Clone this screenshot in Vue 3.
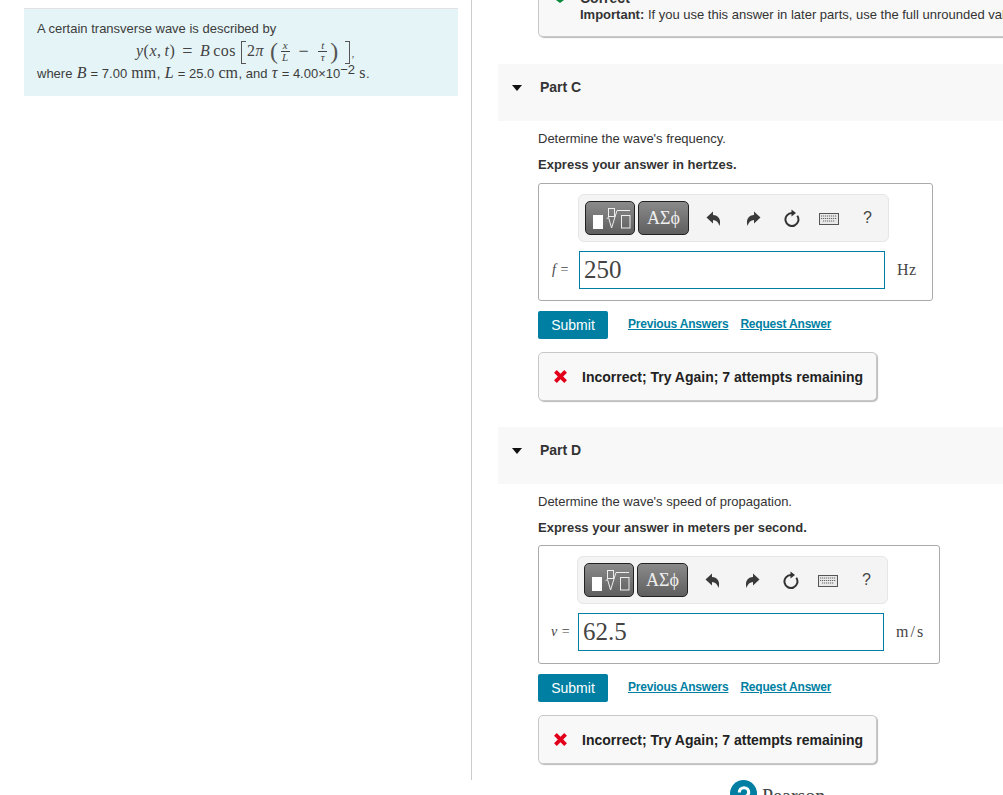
<script setup>
const parts = [
  { name: 'Part C', question: "Determine the wave's frequency.", express: 'Express your answer in hertzes.', symbol: 'f', value: '250', unit: 'Hz', wide: false },
  { name: 'Part D', question: "Determine the wave's speed of propagation.", express: 'Express your answer in meters per second.', symbol: 'v', value: '62.5', unit: 'm/s', wide: true }
]
</script>

<template>
  <div class="page">
    <aside class="left">
      <div class="intro">
        <div class="line1">A certain transverse wave is described by</div>
        <div class="eq">
          <i>y</i><span>(</span><i>x</i><span class="cm">,</span><i>t</i><span>)</span>
          <span class="equals">=</span>
          <i>B</i><span class="cos">cos</span>
          <span class="br open" aria-label="["></span><span class="two">2</span><i>π</i>
          <span class="big par first">(</span>
          <span class="frac"><i>x</i><i class="den">L</i></span>
          <span class="minus">−</span>
          <span class="frac"><i>t</i><i class="den">τ</i></span>
          <span class="big par">)</span><span class="br close" aria-label="]"></span><span class="comma">,</span>
        </div>
        <div class="line3">where <i class="m">B</i> = 7.00 <span class="m">mm</span>, <i class="m">L</i> = 25.0 <span class="m">cm</span>, and <i class="m">τ</i> = 4.00×10<sup>−2</sup> <span class="m">s</span>.</div>
      </div>
    </aside>

    <main class="right">
      <div class="correct">
        <div class="correct-title">
          <svg class="check" width="12" height="8" viewBox="0 0 12 8"><path d="M1 0 H9 L5 3 Z" fill="#0a8a3a" /></svg>
          <b>Correct</b>
        </div>
        <div class="important"><b>Important:</b> If you use this answer in later parts, use the full unrounded value in your calculations.</div>
      </div>

      <section v-for="p in parts" :key="p.name" class="part">
        <header class="part-head">
          <span class="tri"></span>
          <b>{{ p.name }}</b>
        </header>
        <div class="body">
          <p class="question">{{ p.question }}</p>
          <p class="express">{{ p.express }}</p>

          <div class="answer" :class="{ wide: p.wide }">
            <div class="toolbar">
              <div class="tbtn tmpl">
                <span class="block"></span>
                <svg width="27" height="28" viewBox="0 0 27 28" fill="none" stroke="#eee" stroke-width="1">
                  <rect x="3.5" y="4.5" width="6" height="8" />
                  <path d="M1.6 14.6 L3.5 13.5 L6.6 24 L12 6.5 H25" />
                  <rect x="16.5" y="11.5" width="8.5" height="12.5" />
                </svg>
              </div>
              <div class="tbtn greek">ΑΣϕ</div>
              <svg class="ic i-undo" width="16" height="16" viewBox="0 0 16 16"><path d="M0.5 6.5 L7 0.5 V4 C12 4 15.5 8 13.5 15 C12.5 11 10 9 7 9 V12.5 Z" fill="#3a3a3a" /></svg>
              <svg class="ic i-redo" width="16" height="16" viewBox="0 0 16 16"><path d="M15.5 6.5 L9 0.5 V4 C4 4 0.5 8 2.5 15 C3.5 11 6 9 9 9 V12.5 Z" fill="#3a3a3a" /></svg>
              <svg class="ic i-reset" width="18" height="18" viewBox="0 0 18 18" fill="none"><path d="M14.3 6.8 A6.5 6.5 0 1 1 9 4" stroke="#333" stroke-width="2" /><path d="M8.5 0.5 L13 4 L8.5 7.5 Z" fill="#333" /></svg>
              <svg class="ic i-kbd" width="20" height="12" viewBox="0 0 20 12"><rect x="0.5" y="0.5" width="19" height="11" fill="#e8e8e8" stroke="#555" /><path d="M2 3 H18 M2 5.5 H18 M4 8 H16" stroke="#666" stroke-width="1.2" stroke-dasharray="1.2 .8" /></svg>
              <span class="help">?</span>
            </div>
            <div class="input-row">
              <span class="sym"><i>{{ p.symbol }}</i> =</span>
              <div class="input">{{ p.value }}</div>
              <span class="unit">{{ p.unit }}</span>
            </div>
          </div>

          <div class="actions">
            <button class="submit">Submit</button>
            <a class="link">Previous Answers</a>
            <a class="link">Request Answer</a>
          </div>

          <div class="feedback">
            <svg width="15" height="15" viewBox="0 0 14 14"><path d="M1 3.5 L3.5 1 L7 4.5 L10.5 1 L13 3.5 L9.5 7 L13 10.5 L10.5 13 L7 9.5 L3.5 13 L1 10.5 L4.5 7 Z" fill="#e2001a" /></svg>
            <b>Incorrect; Try Again; 7 attempts remaining</b>
          </div>
        </div>
      </section>

      <div class="pearson">
        <svg width="27" height="27" viewBox="0 0 26 26"><circle cx="13" cy="13" r="13" fill="#007fa3" /><path d="M9 12 C9 6 18 6 18 12 C18 16 13 16 13 19 V24" fill="none" stroke="#fff" stroke-width="3" /></svg>
        <span>Pearson</span>
      </div>
    </main>
  </div>
</template>

<style>
html, body { margin: 0; padding: 0; background: #fff; }
</style>

<style scoped>
.page {
  width: 1003px;
  height: 795px;
  overflow: hidden;
  display: flex;
  align-items: flex-start;
  font-family: "Liberation Sans", Arial, sans-serif;
  color: #333;
  font-size: 13px;
  background: #fff;
}
.left {
  flex: none;
  box-sizing: border-box;
  width: 472px;
  height: 780px;
  padding: 8px 13px 0 24px;
  border-right: 1px solid #ccc;
}
.intro {
  background: #e5f5f7;
  border-top: 1px solid #e2e2e2;
  height: 88px;
  box-sizing: border-box;
  padding: 12px 13px 0;
  color: #3c3c3c;
}
.line1 { height: 16px; line-height: 16px; }
.eq {
  height: 26px;
  margin-top: 1px;
  padding-left: 99px;
  display: flex;
  align-items: center;
  font-family: "Liberation Serif", serif;
  font-size: 16px;
  letter-spacing: 0.5px;
  color: #444;
  white-space: nowrap;
}
.cm { margin-right: 3px; }
.equals { margin: 0 7px 0 7px; font-size: 18px; }
.cos { margin-left: 3px; }
.big { font-weight: 100; line-height: 26px; }
.br {
  box-sizing: border-box;
  flex: none;
  width: 5px;
  height: 23px;
  border: 1px solid #555;
  margin-top: 2px;
}
.open { border-right: none; margin-left: 5px; margin-right: 1px; }
.close { border-left: none; margin-left: 4px; }
.par { font-size: 24px; margin: 0 2px 0 3px; color: #555; }
.first { margin-left: 6px; }
.frac {
  display: inline-flex;
  flex-direction: column;
  align-items: center;
  font-size: 11px;
  line-height: 11px;
  width: 9px;
  letter-spacing: 0;
}
.den { border-top: 1px solid #444; width: 100%; text-align: center; }
.minus { margin: 0 9px; font-size: 18px; }
.comma { font-size: 10px; align-self: flex-end; margin-bottom: 5px; margin-left: 2px; }
.line3 { height: 18px; line-height: 18px; white-space: nowrap; }
.m { font-family: "Liberation Serif", serif; font-size: 16px; margin: 0 0.6px; }
.line3 sup { line-height: 0; vertical-align: 4px; font-size: 13px; }

.right { flex: 1; min-width: 0; padding-left: 26px; }
.correct {
  box-sizing: border-box;
  width: 540px;
  height: 37px;
  margin-left: 40px;
  margin-bottom: 27px;
  background: #f8f8f8;
  border: 1px solid #c8c8c8;
  border-top: none;
  border-radius: 0 0 5px 5px;
  box-shadow: 1px 1px 1px #bbb;
  padding-left: 41px;
  display: flex;
  flex-direction: column;
  justify-content: flex-end;
  padding-bottom: 13px;
  white-space: nowrap;
  overflow: hidden;
}
.correct-title { height: 14px; flex: none; font-size: 14px; position: relative; line-height: 14px; margin-bottom: 2px; }
.check { position: absolute; left: -25px; bottom: -3px; }
.important { font-size: 13px; line-height: 16px; height: 16px; flex: none; }
.part-head {
  height: 57px;
  background: #f8f8f8;
  display: flex;
  align-items: center;
  font-size: 14px;
  padding-left: 14px;
  padding-bottom: 12px;
  box-sizing: border-box;
}
.part-head b { margin-left: 18px; color: #333; }
.tri {
  width: 0; height: 0;
  border-left: 5.5px solid transparent;
  border-right: 5.5px solid transparent;
  border-top: 6px solid #111;
  margin-top: 2px;
}
.body { padding-left: 40px; }
.question { margin: 0; padding-top: 9px; line-height: 17px; height: 17px; }
.express { margin: 0 0 10px; padding-top: 9px; line-height: 17px; font-weight: bold; height: 17px; }
.answer {
  box-sizing: border-box;
  width: 395px;
  height: 118px;
  border: 1px solid #aaa;
  border-radius: 3px;
  padding: 10px 0 0 39px;
}
.answer.wide { width: 402px; height: 119px; padding-left: 38px; margin-top: -1px; }
.toolbar {
  box-sizing: border-box;
  width: 311px;
  height: 48px;
  background: #f4f4f4;
  border: 1px solid #e6e6e6;
  border-radius: 6px;
  display: flex;
  align-items: center;
  padding-left: 6px;
}
.tbtn {
  box-sizing: border-box;
  height: 34px;
  width: 50px;
  border: 1px solid #222;
  border-radius: 5px;
  background: linear-gradient(#8a8a8a, #5f5f5f);
  color: #eee;
  display: flex;
  align-items: center;
  justify-content: center;
}
.tmpl { margin-right: 3px; gap: 2px; justify-content: flex-start; padding-left: 7px; }
.block { width: 10px; height: 14px; background: #fff; margin-top: 7px; flex: none; }
.tmpl svg { flex: none; }
.greek { font-family: "Liberation Serif", serif; font-size: 18px; width: 51px; }
.ic { flex: none; margin-top: 2px; }
.i-undo { margin-left: 17px; }
.i-redo { margin-left: 23px; }
.i-reset { margin-left: 22px; margin-top: 0; }
.i-kbd { margin-left: 18px; }
.help { margin-left: 24px; font-size: 16px; color: #444; }
.input-row { display: flex; align-items: center; margin-top: 9px; margin-left: -27px; }
.sym {
  width: 27px;
  margin-left: 1px;
  flex: none;
  font-family: "Liberation Serif", serif;
  font-size: 14px;
  color: #444;
  white-space: nowrap;
  word-spacing: 1px;
}
.input {
  box-sizing: border-box;
  width: 306px;
  height: 38px;
  border: 1px solid #007fa3;
  padding-left: 4px;
  font-family: "Liberation Serif", serif;
  font-size: 25px;
  line-height: 36px;
  color: #444;
}
.unit { margin-left: 12px; font-family: "Liberation Serif", serif; font-size: 16px; letter-spacing: 0.5px; color: #444; }
.wide .unit { letter-spacing: 2px; }
.actions { display: flex; align-items: flex-start; margin-top: 10px; }
.submit {
  width: 70px;
  height: 28px;
  border: none;
  border-radius: 2px;
  background: #007fa3;
  color: #fff;
  font-family: "Liberation Sans", Arial, sans-serif;
  font-size: 14px;
  padding: 0;
  margin-right: 20px;
}
.link {
  color: #007fa3;
  font-size: 12px;
  font-weight: bold;
  letter-spacing: -0.2px;
  text-decoration: underline;
  line-height: 26px;
  margin-right: 12px;
  white-space: nowrap;
}
.feedback {
  box-sizing: border-box;
  width: 339px;
  height: 49px;
  margin-top: 13px;
  margin-bottom: 26px;
  background: #f8f8f8;
  border: 1px solid #c8c8c8;
  border-radius: 5px;
  box-shadow: 1px 1px 1px #bbb;
  display: flex;
  align-items: center;
  padding-left: 14px;
  gap: 14px;
  color: #222;
  font-size: 14px;
  white-space: nowrap;
}
.pearson {
  display: flex;
  align-items: flex-start;
  margin: -10px 0 0 232px;
  font-family: "Liberation Serif", serif;
  font-size: 20px;
  color: #444;
  gap: 5px;
}
.pearson span { margin-top: 5px; }
</style>
